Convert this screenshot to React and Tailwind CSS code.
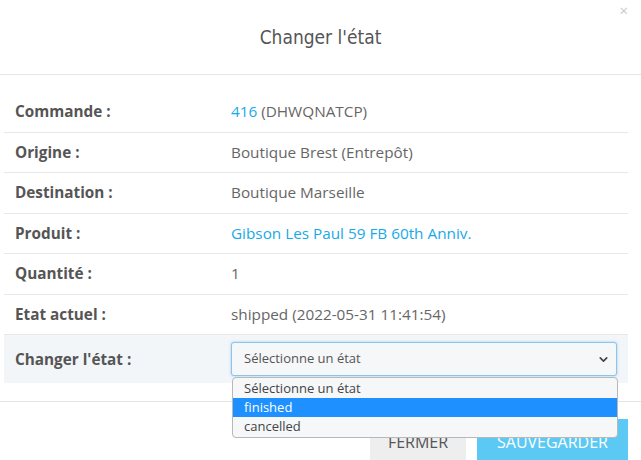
import { ChevronDown } from 'lucide-react'

const ROWS = [
  { label: 'Commande :', value: <><span className="text-[#17aae8]">416</span> (DHWQNATCP)</> },
  { label: 'Origine :', value: 'Boutique Brest (Entrepôt)' },
  { label: 'Destination :', value: 'Boutique Marseille' },
  { label: 'Produit :', value: <span className="text-[#17aae8]">Gibson Les Paul 59 FB 60th Anniv.</span> },
  { label: 'Quantité :', value: '1' },
  { label: 'Etat actuel :', value: 'shipped (2022-05-31 11:41:54)' },
]

const OPTIONS = ['Sélectionne un état', 'finished', 'cancelled']

export default function App() {
  return (
    <div className="relative h-[460px] w-[641px] overflow-hidden bg-white font-['Open_Sans',sans-serif] text-[#666]">
      <button className="absolute right-[13px] top-[3px] text-[15px] leading-none text-[#c8c8c8]">×</button>

      <div className="flex h-[75px] items-center justify-center border-b border-[#e5e5e5]">
        <h2 className="font-['DejaVu_Sans_Condensed','DejaVu_Sans',sans-serif] text-[19px] text-[#555]">Changer l'état</h2>
      </div>

      <div className="ml-[4px] mt-[17px] w-[624px]">
        {ROWS.map((r) => (
          <div key={r.label} className="flex h-[40.5px] items-center border-b border-[#e8e8e8] text-[15.3px]">
            <div className="w-[227px] pl-[11px] font-bold text-[#555]">{r.label}</div>
            <div>{r.value}</div>
          </div>
        ))}
        <div className="relative flex h-[48px] items-center bg-[#f3f6f9] text-[15.3px]">
          <div className="w-[227px] pl-[11px] font-bold text-[#555]">Changer l'état :</div>
          <div className="relative flex h-[34px] w-[386px] items-center rounded-[3px] border border-[#8cc4f0] bg-[#f5f7f9] pl-[12px] text-[13px] text-[#555] shadow-[0_0_3px_rgba(102,175,233,0.6)]">
            Sélectionne un état
            <ChevronDown className="absolute right-[6px] top-[10px] h-[13px] w-[13px] text-[#444]" strokeWidth={3} />
          </div>
          <div className="absolute left-[228px] top-[42px] z-10 w-[386px] overflow-hidden rounded-[4px] border border-[#b8b8b8] bg-[#f5f7f9] py-[1px] text-[13px] text-[#444]">
            {OPTIONS.map((o) => (
              <div key={o} className={`h-[19px] pl-[11px] leading-[19px] ${o === 'finished' ? 'bg-[#1e90ff] text-white' : ''}`}>{o}</div>
            ))}
          </div>
        </div>
      </div>

      <div className="mt-[18px] flex justify-end gap-[11px] border-t border-[#e5e5e5] pr-[13px] pt-[17px]">
        <button className="h-[45px] w-[96px] bg-[#eeeeee] text-[16px] uppercase text-[#555]">Fermer</button>
        <button className="h-[45px] w-[151px] bg-[#5bc9f3] text-[16px] uppercase text-white">Sauvegarder</button>
      </div>
    </div>
  )
}
